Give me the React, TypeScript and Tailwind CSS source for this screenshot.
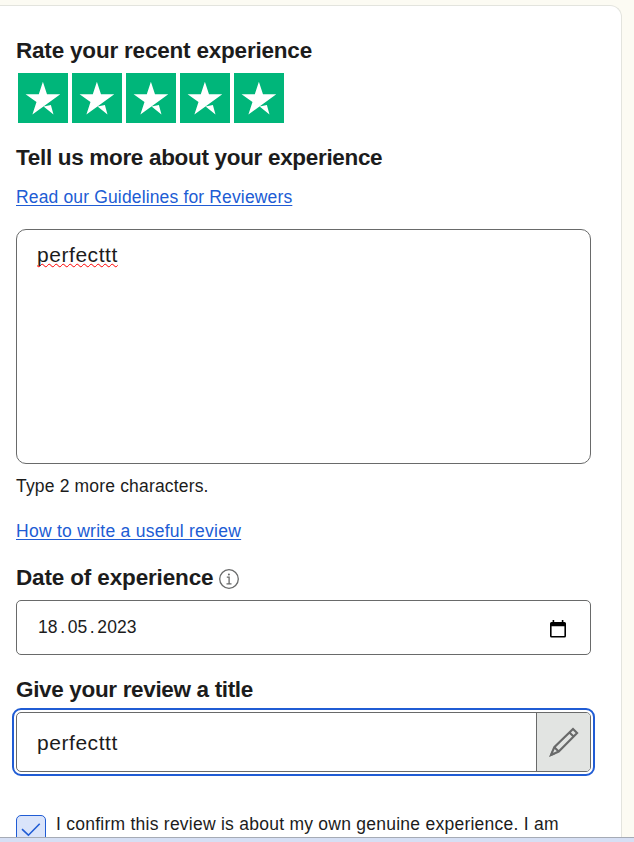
const heading =
  "relative top-px whitespace-nowrap text-[22.5px] leading-[28px] font-bold text-[#1c1c1c]";
const link =
  "self-start whitespace-nowrap text-[17.5px] leading-[24px] text-[#205cd4] underline decoration-1 underline-offset-2";

function Star() {
  return (
    <svg className="h-[50px] w-[50.2px] bg-[#00b67a]" viewBox="0 0 50 50" aria-hidden="true">
      <path
        fill="#fff"
        d="M24.8 8.8 28.9 21.2H42.2L14.3 41.5 18.4 28.9 7.5 21.2H20.7ZM25.5 33.5 32.8 32 35.4 41.5Z"
      />
    </svg>
  );
}

function Info() {
  return (
    <svg className="mt-[6px] ml-[5.5px] h-5 w-5" viewBox="0 0 20 20" fill="none" stroke="#696a6a" aria-hidden="true">
      <circle cx="10" cy="10" r="9.3" strokeWidth="1.3" />
      <path strokeWidth="1.3" d="M7.8 8.2h2.3v6.6M7.5 14.9h5" />
      <circle cx="9.9" cy="5.4" r="1" fill="#696a6a" stroke="none" />
    </svg>
  );
}

function Calendar() {
  return (
    <svg className="mt-[2px] mr-[24px] h-[18px] w-4" viewBox="0 0 16 18" aria-hidden="true">
      <path
        fillRule="evenodd"
        d="M2.6 0h1.6v2h7.6V0h1.6v2H14.5Q16 2 16 3.5V16Q16 17.6 14.5 17.6H1.5Q0 17.6 0 16V3.5Q0 2 1.5 2H2.6ZM1.6 6.2V16H14.4V6.2Z"
      />
    </svg>
  );
}

function Pencil() {
  return (
    <svg className="h-[30px] w-[30px]" viewBox="0 0 30 30" fill="none" stroke="#696a6a" strokeWidth="2.1" aria-hidden="true">
      <path d="M2 28 5.3 20.2 24 1.9 28.1 6 9.7 24.5ZM5.3 20.2 9.7 24.5M20.4 5.4 24.6 9.5" />
      <path fill="#696a6a" stroke="none" d="m.8 29.2 1.8-5 3.2 3.2Z" />
    </svg>
  );
}

export default function App() {
  return (
    <div className="flex h-[842px] w-[634px] flex-col overflow-hidden bg-[#fcfbf3] font-['Liberation_Sans',Arial,sans-serif] text-[#1c1c1c]">
      <main className="mt-[5px] flex h-[832px] w-[622px] flex-col overflow-hidden rounded-tr-[12px] border-t border-r border-[#e3e4de] bg-white pt-[30px] pr-[30px] pl-4">
        <h2 className={`${heading} tracking-[-0.2px]`}>Rate your recent experience</h2>
        <div className="mt-[9px] ml-[1.7px] flex gap-[3.9px]">
          <Star />
          <Star />
          <Star />
          <Star />
          <Star />
        </div>
        <h2 className={`${heading} mt-5 tracking-[-0.32px]`}>Tell us more about your experience</h2>
        <a className={`${link} mt-[14px] tracking-[0.15px]`}>Read our Guidelines for Reviewers</a>
        <div className="mt-5 h-[235px] w-[575px] shrink-0 rounded-[10px] border border-[#696a6a] px-5 pt-[11px] text-[21px] leading-[28px] tracking-[0.55px]">
          <span className="underline decoration-[#f00] decoration-wavy decoration-[1.2px] underline-offset-[0.5px] [text-decoration-skip-ink:none]">perfecttt</span>
        </div>
        <p className="mt-[10px] text-[17.5px] leading-[24px] tracking-[0.17px]">Type 2 more characters.</p>
        <a className={`${link} mt-[21px] tracking-[0.26px]`}>How to write a useful review</a>
        <div className="mt-5 flex h-[28px]">
          <h2 className={`${heading} tracking-[-0.15px]`}>Date of experience</h2>
          <Info />
        </div>
        <div className="mt-[9px] flex h-[55px] w-[575px] shrink-0 items-center justify-between rounded-[5px] border border-[#696a6a] pl-[21px]">
          <span className="flex text-[17.5px] tracking-[0.1px]">
            18<span className="w-[10px] text-center">.</span>05<span className="w-[10px] text-center">.</span>2023
          </span>
          <Calendar />
        </div>
        <h2 className={`${heading} mt-5 tracking-[-0.34px]`}>Give your review a title</h2>
        <div className="mt-[9px] flex h-[60px] w-[575px] shrink-0 overflow-hidden rounded-[5px] border border-[#696a6a] outline-2 outline-offset-2 outline-[#205cd4]">
          <div className="flex flex-1 items-center pt-px pl-5 text-[21px] tracking-[0.55px]">perfecttt</div>
          <div className="flex w-[54px] items-center justify-center border-l border-[#696a6a] bg-[#e2e4e2]">
            <Pencil />
          </div>
        </div>
        <div className="mt-[43px] flex shrink-0">
          <div className="h-[30px] w-[30px] rounded-[5px] border border-[#205cd4] bg-[#dae4fa]">
            <svg className="h-7 w-7" viewBox="0 0 28 28" fill="none" stroke="#205cd4" strokeWidth="1.6" aria-hidden="true">
              <path d="M5 13.2 11.4 19.2 22.7 7.8" />
            </svg>
          </div>
          <p className="-mt-[3px] ml-[10px] whitespace-nowrap text-[17.5px] leading-[24px] tracking-[0.25px]">
            I confirm this review is about my own genuine experience. I am
          </p>
        </div>
      </main>
      <footer className="h-[5px] shrink-0 border-t border-[#a6abb5] bg-[#d6dff4]" />
    </div>
  );
}
